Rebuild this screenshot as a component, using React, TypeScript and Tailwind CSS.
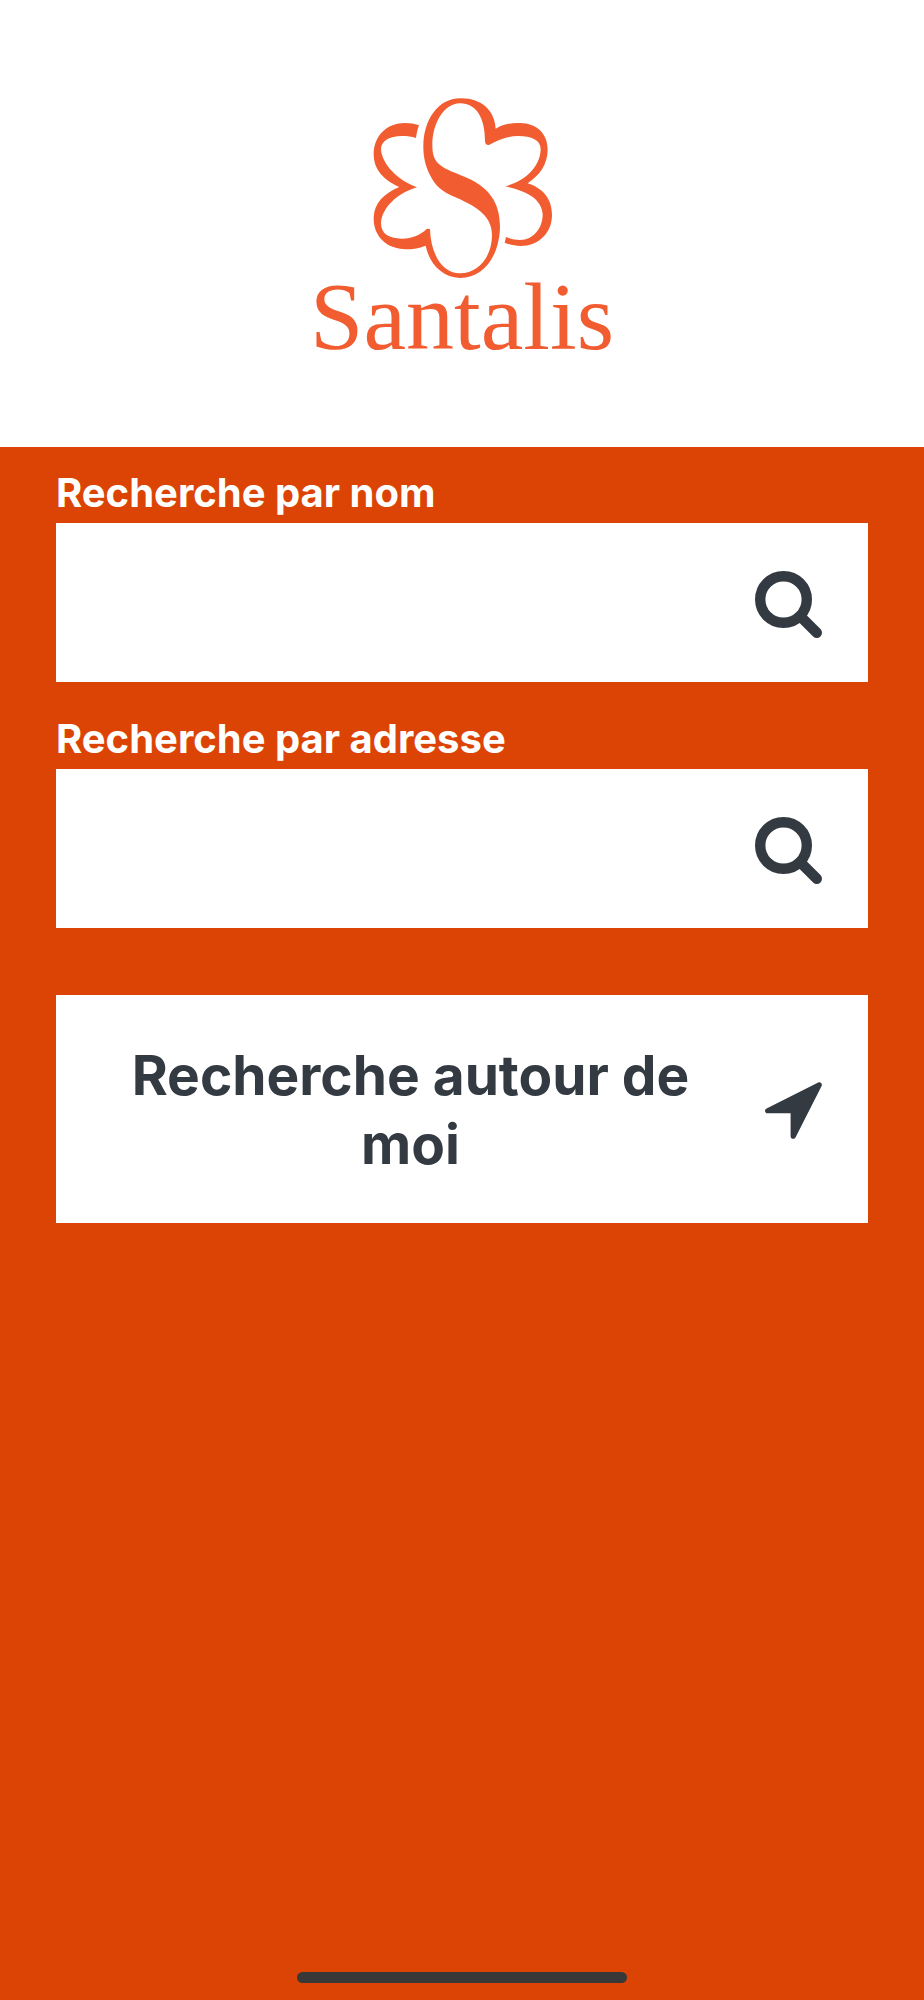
import { useState } from "react";

function Logo() {
  return (
    <div className="flex flex-col items-center text-[#f15d31]">
      <svg
        className="size-[204px]"
        viewBox="0 0 612 612"
        fill="currentColor"
        aria-hidden="true"
      >
        <path d="M190 185C190 105 235 40 300 40C362 38 404 75 407 131C430 118 452 113 480 114C530 115 563 145 563 195C562 238 540 270 503 295C548 310 576 340 576 390C576 445 535 483 482 483C465 483 450 479 434 473L438 456C452 462 466 465 480 465C520 465 548 430 548 388C546 345 505 318 435 304C495 290 541 245 542 193C542 165 515 153 475 153C445 153 420 162 387 180C380 181 375 177 375 168C375 100 350 55 300 55C252 55 217 115 217 180C217 236 240 246 306 272C385 302 420 350 420 425C418 515 370 579 300 579C245 577 208 535 197 482C180 489 160 493 137 493C80 492 40 455 41 398C42 355 72 325 118 306C72 285 41 255 41 207C42 150 82 114 135 114C150 114 163 116 177 121C172 134 170 146 168 159C155 155 142 153 126 153C88 153 63 168 63 193C65 235 110 285 171 307C110 325 65 370 63 415C63 445 85 461 125 461C158 460 182 449 201 431L210 432C212 505 245 565 300 565C355 565 396 515 396 450C396 395 355 367 290 338C245 320 226 302 211 272C196 243 190 215 190 185Z" />
      </svg>
      <h1 className="-mt-[26px] font-['Liberation_Serif',serif] text-[96px] leading-[108px]">
        Santalis
      </h1>
    </div>
  );
}

function SearchIcon() {
  return (
    <svg className="size-[67px]" viewBox="0 0 67 67" fill="none" stroke="currentColor" aria-hidden="true">
      <circle cx="28.5" cy="28.5" r="23.3" strokeWidth="10.4" />
      <path d="M46 46L61.8 61.8" strokeWidth="10.4" strokeLinecap="round" />
    </svg>
  );
}

function LocationIcon() {
  return (
    <svg className="h-[57px] w-[57px]" viewBox="0 0 57 57" fill="currentColor" aria-hidden="true">
      <path d="M53.2 0.5C55.6 -0.4 57.6 1.6 56.6 4L30.6 55.2C29.4 57.7 25.6 57.2 25.6 54.2V31.2H2.6C-0.4 31.2 -0.9 27.6 1.6 26.4Z" />
    </svg>
  );
}

function SearchField({ id, label }: { id: string; label: string }) {
  const [value, setValue] = useState("");
  return (
    <div className="flex flex-col gap-2">
      <label htmlFor={id} className="text-[40px] leading-[44px] font-bold text-white">
        {label}
      </label>
      <div className="flex h-[159px] items-center bg-white pr-[46px]">
        <input
          id={id}
          type="text"
          value={value}
          onChange={(e) => setValue(e.target.value)}
          className="h-full min-w-0 flex-1 bg-transparent px-11 text-[40px] outline-none"
        />
        <button type="submit" aria-label={label} className="pt-[3px]">
          <SearchIcon />
        </button>
      </div>
    </div>
  );
}

export default function App() {
  return (
    <div className="flex min-h-screen flex-col bg-[#dc4405] font-['Inter',sans-serif] text-[#343a42]">
      <header className="flex h-[447px] justify-center bg-white pt-[85px]">
        <Logo />
      </header>
      <main className="px-14 pt-6">
        <form className="flex flex-col gap-[35px]" onSubmit={(e) => e.preventDefault()}>
          <SearchField id="name" label="Recherche par nom" />
          <SearchField id="address" label="Recherche par adresse" />
          <button
            type="button"
            className="mt-8 flex min-h-[228px] items-center bg-white pt-[46px] pr-[46px] pb-11 pl-11 text-[55px] leading-[69px] font-bold"
          >
            <span className="flex-1 pr-11 text-center">Recherche autour de moi</span>
            <LocationIcon />
          </button>
        </form>
      </main>
      <div className="mx-auto mt-auto mb-[17px] h-[11px] w-[330px] rounded-full bg-[#383838]" />
    </div>
  );
}
